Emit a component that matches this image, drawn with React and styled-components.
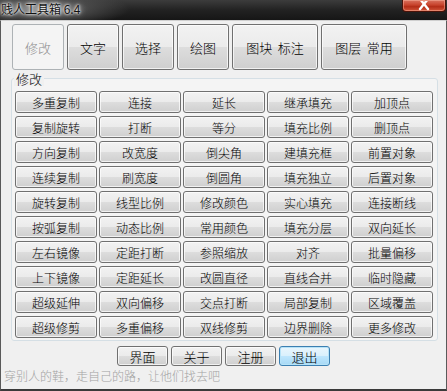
import React from "react";
import styled, { createGlobalStyle, css } from "styled-components";

const GlobalStyle = createGlobalStyle`
  html, body {
    margin: 0;
    padding: 0;
    background: #f0f0f0;
  }
  body {
    font-family: "Noto Sans CJK SC", "Liberation Sans", sans-serif;
    font-size: 12px;
  }
`;

const tabs = [
  { label: "修改", wide: false, active: true },
  { label: "文字" },
  { label: "选择" },
  { label: "绘图" },
  { label: "图块  标注", wide: true },
  { label: "图层  常用", wide: true },
];

const commands = [
  "多重复制", "连接", "延长", "继承填充", "加顶点",
  "复制旋转", "打断", "等分", "填充比例", "删顶点",
  "方向复制", "改宽度", "倒尖角", "建填充框", "前置对象",
  "连续复制", "刷宽度", "倒圆角", "填充独立", "后置对象",
  "旋转复制", "线型比例", "修改颜色", "实心填充", "连接断线",
  "按弧复制", "动态比例", "常用颜色", "填充分层", "双向延长",
  "左右镜像", "定距打断", "参照缩放", "对齐", "批量偏移",
  "上下镜像", "定距延长", "改圆直径", "直线合并", "临时隐藏",
  "超级延伸", "双向偏移", "交点打断", "局部复制", "区域覆盖",
  "超级修剪", "多重偏移", "双线修剪", "边界删除", "更多修改",
];

const footerButtons = [
  { label: "界面" },
  { label: "关于" },
  { label: "注册" },
  { label: "退出", primary: true },
];

function App() {
  return (
    <Window>
      <GlobalStyle />
      <TitleBar>
        <Title>贱人工具箱 6.4</Title>
        <CloseButton>
          <svg width="12" height="10" viewBox="0 0 12 10">
            <path d="M2 -2 L10 8 M10 -2 L2 8" stroke="#fff" strokeWidth="2.4" strokeLinecap="round" />
          </svg>
        </CloseButton>
      </TitleBar>

      <Body>
        <TabRow>
          {tabs.map((t) => (
            <TabButton key={t.label} $wide={t.wide} $active={t.active}>
              {t.label}
            </TabButton>
          ))}
        </TabRow>

        <GroupBox>
          <legend>修改</legend>
          <CommandGrid>
            {commands.map((c) => (
              <CommandButton key={c}>{c}</CommandButton>
            ))}
          </CommandGrid>
        </GroupBox>

        <FooterButtons>
          {footerButtons.map((b) => (
            <DialogButton key={b.label} $primary={b.primary}>
              {b.label}
            </DialogButton>
          ))}
        </FooterButtons>

        <Motto>穿别人的鞋，走自己的路，让他们找去吧</Motto>
      </Body>
    </Window>
  );
}

const Window = styled.div`
  width: 447px;
  height: 391px;
  display: flex;
  flex-direction: column;
  box-sizing: border-box;
  background: #f0f0f0;
  overflow: hidden;
`;

const TitleBar = styled.div`
  height: 20px;
  flex: none;
  display: flex;
  justify-content: space-between;
  align-items: flex-start;
  background: radial-gradient(ellipse 90px 18px at 40px 9px, #8a8a8a 0%, rgba(90, 90, 90, 0.6) 55%, rgba(40, 40, 40, 0) 100%),
    linear-gradient(to bottom, #3c3c3c 0%, #222 50%, #161616 100%);
`;

const Title = styled.div`
  padding-left: 1px;
  line-height: 18px;
  font-size: 12px;
  color: #111;
  text-shadow: 0 0 6px #fff, 0 0 3px #fff, 0 0 2px #ddd;
`;

const CloseButton = styled.div`
  width: 44px;
  height: 12px;
  margin-right: 1px;
  display: flex;
  align-items: flex-end;
  justify-content: center;
  box-sizing: border-box;
  border: 1px solid #4a1208;
  border-top: none;
  border-radius: 0 0 4px 4px;
  background: linear-gradient(to bottom, #d9735f 0%, #c8432c 45%, #b32d17 60%, #d2563a 100%);
  box-shadow: inset 0 0 0 1px rgba(255, 190, 170, 0.45);
  overflow: hidden;
`;

const Body = styled.div`
  flex: 1;
  display: flex;
  flex-direction: column;
  box-sizing: border-box;
  border: 1px solid #5a5a5a;
  border-top: 1px solid #cfcfcf;
  border-bottom: 2px solid #3a3a3a;
  background: #f0f0f0;
`;

const buttonFace = css`
  box-sizing: border-box;
  border: 1px solid #707070;
  border-radius: 3px;
  background: linear-gradient(to bottom, #f2f2f2 0%, #ebebeb 50%, #dddddd 51%, #cfcfcf 100%);
  box-shadow: inset 0 0 0 1px rgba(255, 255, 255, 0.7);
  color: #000;
  display: flex;
  align-items: center;
  justify-content: center;
  white-space: pre;
  font-family: "Noto Sans CJK SC", "Liberation Sans", sans-serif;
  font-weight: 300;
`;

const TabRow = styled.div`
  display: flex;
  gap: 3px;
  padding: 3px 0 0 11px;
`;

const TabButton = styled.div`
  ${buttonFace};
  width: ${(p) => (p.$wide ? "86px" : "52px")};
  height: 46px;
  font-size: 13px;

  ${(p) =>
    p.$active &&
    css`
      border-color: #adb2b5;
      background: #f4f4f4;
      box-shadow: none;
      color: #8d8d8d;
    `}
`;

const GroupBox = styled.fieldset`
  margin: 1px 8px 0 10px;
  padding: 5px 4px 2px 3px;
  border: 1px solid #d5dfe5;
  border-radius: 3px;
  background: #f4f4f4;
  min-width: 0;

  legend {
    padding: 0 2px;
    margin-left: -1px;
    font-size: 13px;
    font-weight: 300;
    line-height: 15px;
    color: #000;
    background: #f0f0f0;
  }
`;

const CommandGrid = styled.div`
  display: grid;
  grid-template-columns: repeat(5, 82px);
  grid-auto-rows: 22px;
  column-gap: 2px;
  row-gap: 3px;
`;

const CommandButton = styled.div`
  ${buttonFace};
  font-size: 12px;
`;

const FooterButtons = styled.div`
  display: flex;
  justify-content: center;
  gap: 3px;
  margin-top: 5px;
`;

const DialogButton = styled.div`
  ${buttonFace};
  width: 51px;
  height: 20px;
  font-size: 13px;

  ${(p) =>
    p.$primary &&
    css`
      border-color: #3c7fb1;
      background: linear-gradient(to bottom, #eaf6fd 0%, #d9f0fc 50%, #bee6fd 51%, #a7d9f5 100%);
      box-shadow: inset 0 0 0 1px #b6e3f8;
    `}
`;

const Motto = styled.div`
  margin-top: 3px;
  padding-left: 3px;
  font-size: 12px;
  font-weight: 300;
  line-height: 14px;
  color: #a3a3a3;
`;

export default App;
